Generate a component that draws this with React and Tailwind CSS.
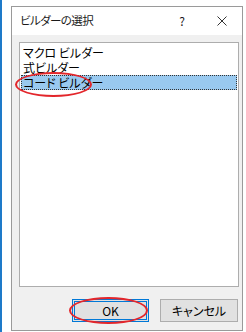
import React from "react";

const items = ["マクロ ビルダー", "式ビルダー", "コード ビルダー"];

export default function App() {
  let selected = 2;

  return (
    <div className="w-[246px] h-[332px] bg-white flex relative overflow-hidden font-['Noto_Sans_CJK_JP','Noto_Sans',sans-serif] [font-feature-settings:'palt']">
      {/* blue edge of the window behind */}
      <div className="w-[2px] h-full bg-[#1e7ac9]"></div>
      <div className="w-[9px]"></div>

      {/* dialog */}
      <div className="mt-[6px] w-[232px] h-[325px] border border-[#9a9a9a] bg-[#f0f0f0] flex flex-col">
        {/* title bar */}
        <div className="h-[28px] bg-white flex items-center pl-[8px] text-[#1a1a1a]">
          <span className="flex-1 leading-none text-[11.5px] tracking-[-0.6px]">ビルダーの選択</span>
          <span className="w-[10px] text-center text-[12px] leading-none mr-[30px]">?</span>
          <svg width="10" height="10" viewBox="0 0 10 10" className="mr-[15px]">
            <path d="M0.5 0.5 L9.5 9.5 M9.5 0.5 L0.5 9.5" stroke="#333" strokeWidth="1" fill="none" />
          </svg>
        </div>

        {/* list */}
        <div className="mt-[7px] ml-[7px] w-[220px] h-[245px] border border-[#adadad] bg-white pt-[2px] px-[1px]">
          {items.map((item, index) => {
            return (
              <div
                key={index}
                className={`h-[15px] flex items-center pl-[2px] text-[12px] text-black leading-none ${index === selected ? " bg-[#99c9ef] outline-1 outline-dotted outline-[#333] -outline-offset-1 " : " "}`}
              >
                {item}
              </div>
            );
          })}
        </div>

        {/* buttons */}
        <div className="mt-[12px] flex gap-[11px] pl-[60px]">
          <button className="w-[77px] h-[23px] border border-[#0078d7] bg-[#e1e1e1] text-[12px] text-black flex items-center justify-center">
            <span className="w-[73px] h-[19px] border border-[#0078d7] flex items-center justify-center">OK</span>
          </button>
          <button className="w-[78px] h-[23px] border border-[#adadad] bg-[#e1e1e1] text-[12px] text-black flex items-center justify-center">
            キャンセル
          </button>
        </div>
      </div>

      {/* red annotation ellipses */}
      <div className="absolute left-[15px] top-[72px] w-[77px] h-[25px] border-2 border-[#e3262b] rounded-[50%]"></div>
      <div className="absolute left-[69px] top-[297px] w-[79px] h-[27px] border-2 border-[#e3262b] rounded-[50%]"></div>
    </div>
  );
}
